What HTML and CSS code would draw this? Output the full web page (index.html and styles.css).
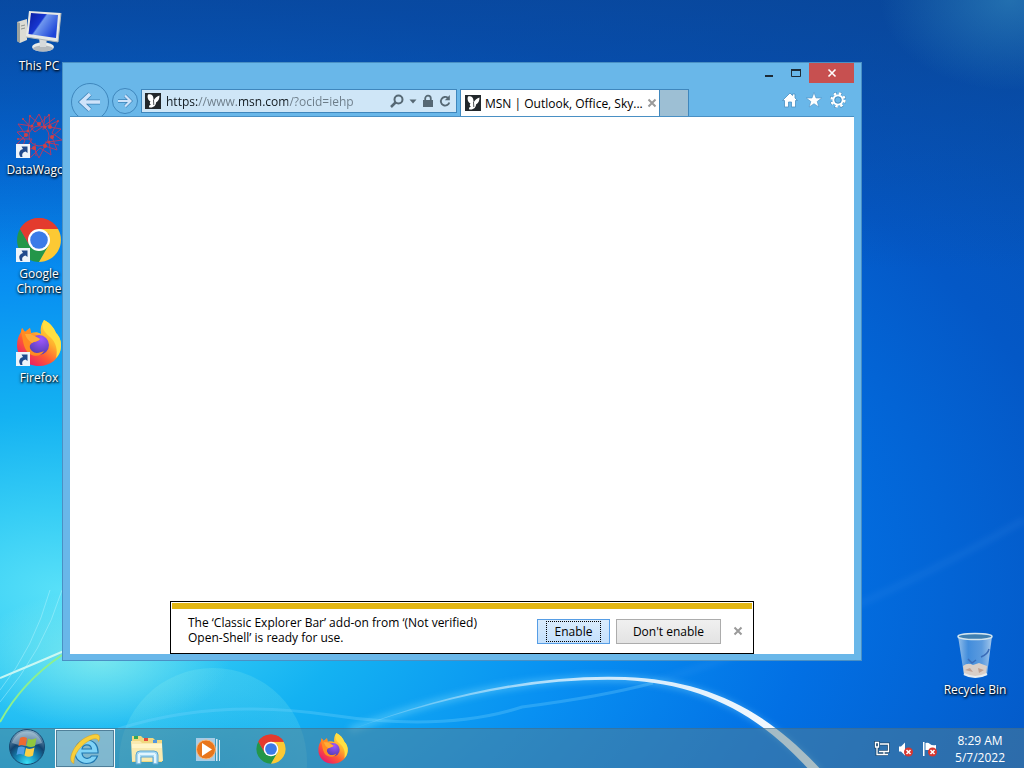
FILE: index.html
```
<!DOCTYPE html>
<html lang="en">
<head>
    <meta charset="UTF-8">
    <meta name="viewport" content="width=device-width, initial-scale=1.0">
    <title>Desktop</title>
    <link rel="stylesheet" href="styles.css">
</head>
<body>

    <!-- Wallpaper -->
    <svg class="wallpaper" viewBox="0 0 1024 768" preserveAspectRatio="none" aria-hidden="true">
        <defs>
            <radialGradient id="sky" gradientUnits="userSpaceOnUse" cx="0" cy="0" r="800" gradientTransform="translate(60 590) scale(1.7 1)">
                <stop offset="0" stop-color="#58e0f8"/>
                <stop offset=".1" stop-color="#36cdf5"/>
                <stop offset=".22" stop-color="#14b2f2"/>
                <stop offset=".38" stop-color="#0890f2"/>
                <stop offset=".55" stop-color="#0270e4"/>
                <stop offset=".76" stop-color="#0458c6"/>
                <stop offset="1" stop-color="#0650b0"/>
            </radialGradient>
            <linearGradient id="dusk" x2="0" y2="1">
                <stop offset="0" stop-color="#0a4392" stop-opacity=".7"/>
                <stop offset=".35" stop-color="#0a4392" stop-opacity="0"/>
            </linearGradient>
            <radialGradient id="corner">
                <stop offset="0" stop-color="#3c97c4" stop-opacity=".5"/>
                <stop offset="1" stop-color="#3c97c4" stop-opacity="0"/>
            </radialGradient>
            <radialGradient id="bubble" cy=".6">
                <stop offset="0" stop-color="#9ff5e8" stop-opacity=".04"/>
                <stop offset="1" stop-color="#9ff5e8" stop-opacity=".16"/>
            </radialGradient>
            <radialGradient id="glow">
                <stop offset="0" stop-color="#b6ffe9" stop-opacity=".5"/>
                <stop offset="1" stop-color="#b6ffe9" stop-opacity="0"/>
            </radialGradient>
            <linearGradient id="beam" gradientUnits="userSpaceOnUse" x1="350" y1="0" x2="820" y2="0">
                <stop offset="0" stop-color="#fff" stop-opacity=".1"/>
                <stop offset=".5" stop-color="#fff" stop-opacity=".75"/>
                <stop offset="1" stop-color="#fff"/>
            </linearGradient>
            <filter id="soft" x="-20%" y="-20%" width="140%" height="140%"><feGaussianBlur stdDeviation="3"/></filter>
        </defs>
        <rect width="1024" height="768" fill="url(#sky)"/>
        <rect width="1024" height="768" fill="url(#dusk)"/>
        <ellipse cx="1010" cy="0" rx="130" ry="90" fill="url(#corner)"/>
        <circle cx="213" cy="762" r="94" fill="url(#bubble)"/>
        <ellipse cx="100" cy="660" rx="130" ry="70" fill="url(#glow)"/>
        <path d="M118 729Q215 698 330 715T522 707Q600 697 653 683" fill="none" stroke="#7fd6ff" stroke-opacity=".28" stroke-width="3"/>
        <path d="M653 683Q850 620 1024 520" fill="none" stroke="#7fc0ff" stroke-opacity=".1" stroke-width="5" filter="url(#soft)"/>
        <path d="M350 730Q500 674 625 679C700 682 760 710 819 772" fill="none" stroke="#8fe4ff" stroke-opacity=".35" stroke-width="7" filter="url(#soft)"/>
        <path d="M350 730Q500 673 625 677C705 680 765 708 823 772L811 772C758 712 700 684 625 680Q500 676 350 730Z" fill="url(#beam)"/>
        <path d="M0 678Q34 664 64 651" fill="none" stroke="#e6fff4" stroke-opacity=".8" stroke-width="2"/>
        <path d="M0 722Q22 682 62 655" fill="none" stroke="#8cf08e" stroke-width="2"/>
        <path d="M0 690Q34 648 50 590M0 702Q44 650 62 590" fill="none" stroke="#c4f8ff" stroke-opacity=".4"/>
    </svg>

    <!-- Shared icons -->
    <svg class="sprite" aria-hidden="true">
        <symbol id="chrome" viewBox="0 0 48 48">
            <path d="M24 24L5 13A22 22 0 0 1 43 13Z" fill="#e33b2e"/>
            <path d="M5 13A22 22 0 0 0 24 46L34 29.500L24 24L14.500 29.500Z" fill="#239649"/>
            <path d="M43 13A22 22 0 0 1 24 46L33.500 29.500L34 18L24 14V13Z" fill="#fcc934"/>
            <path d="M5 13L14.500 29.500L24 24V13H43A22 22 0 0 0 5 13Z" fill="#e33b2e"/>
            <circle cx="24" cy="24" r="11" fill="#fff"/>
            <circle cx="24" cy="24" r="8.800" fill="#3b7be8"/>
        </symbol>
        <symbol id="firefox" viewBox="0 0 48 48">
            <defs>
                <linearGradient id="fire" x1=".85" y1=".1" x2=".2" y2=".95">
                    <stop offset="0" stop-color="#ffe94b"/>
                    <stop offset=".35" stop-color="#ffb02d"/>
                    <stop offset=".65" stop-color="#ff5a35"/>
                    <stop offset="1" stop-color="#e8196c"/>
                </linearGradient>
                <radialGradient id="globe" cx=".6" cy=".2" r=".9">
                    <stop offset="0" stop-color="#a057ff"/>
                    <stop offset="1" stop-color="#4a3aa8"/>
                </radialGradient>
            </defs>
            <path d="M29 0C35 3 39 8 41 13C45 17 46.500 22 46 27C45 38 36 46 24 46C11 46 2 37 2 25C2 19 4 15 6 12L7 8L10 12L15 8L16 13C20 12 23 12 26 14C25 9 26 4 29 0Z" fill="url(#fire)"/>
            <path d="M29 0C35 3 39 8 41 13C45 17 46.500 22 46 27C45.500 32 44 35 41 38C43 30 41 22 35 17C29 12 26 8 29 0Z" fill="#ffdf42"/>
            <circle cx="24" cy="25" r="10" fill="url(#globe)"/>
            <path d="M6 12L7 8L10 12L15 8L16 14L25 19C23 22 19 21 17 23C14 25 14 28 17 31C20 34 25 33 29 31C26 38 15 37 11 30C8 25 8 19 6 12Z" fill="#ff8b22"/>
            <path d="M16 14L25 19C23 22 19 21 17 23Q12 20 10 14Z" fill="#ffab38"/>
        </symbol>
        <symbol id="shortcut" viewBox="0 0 14 14">
            <path d="M0 0H14V14H0Z" fill="#edf4fa"/>
            <path d="M4.500 13C2 9 3.500 6 7 5L5.500 2.500H11.500V9L9.500 7.500C6.500 8.500 5.500 10 6.500 13Z" fill="#204a8c"/>
        </symbol>
        <symbol id="msn" viewBox="0 0 16 16">
            <path d="M0 0H16V16H0Z" fill="#22272b"/>
            <path d="M3 1.500C6 .5 8 2 8.300 4.500L8.600 7.500C10 5 12 3 14.500 2.500C14.500 6 13.500 8 11 9.500C11 12 9 15 4.500 14.500C3.500 14 4 12 6 11.500C4.500 11 4.500 9.500 5.500 8.500C3 7.500 2 4 3 1.500Z" fill="#fff"/>
            <path d="M8.500 7L8.800 12" stroke="#22272b" stroke-width=".8"/>
        </symbol>
        <symbol id="cross" viewBox="0 0 10 10">
            <path d="M1.500 1.500L8.500 8.500M8.500 1.500L1.500 8.500" fill="none" stroke="currentColor" stroke-width="2"/>
        </symbol>
    </svg>

    <main class="desktop">
        <div class="icon-column">
            <a class="desktop-icon" href="#this-pc">
                <svg viewBox="0 0 48 48" aria-hidden="true">
                    <defs>
                        <linearGradient id="screen" x2="1" y2=".6">
                            <stop offset="0" stop-color="#0a1c9e"/>
                            <stop offset=".45" stop-color="#1736d1"/>
                            <stop offset=".5" stop-color="#6f97ee"/>
                            <stop offset="1" stop-color="#1e45d8"/>
                        </linearGradient>
                    </defs>
                    <path d="M2 14L12 11V32L5 35L2 33Z" fill="#dcdcd4"/>
                    <path d="M2 14L5 15V35L2 33Z" fill="#9ba29f"/>
                    <path d="M6 18L10 17M6 21L10 20" stroke="#8d9490"/>
                    <ellipse cx="28" cy="39" rx="11" ry="4.500" fill="#e9ebe9"/>
                    <ellipse cx="28" cy="40.500" rx="10" ry="3" fill="#b4b9bd"/>
                    <path d="M24 29H32L31 39H25Z" fill="#d7dadb"/>
                    <path d="M14 3L46 5L43 34L11 29Z" fill="#e7e9e7"/>
                    <path d="M16 5L43 7L41 30L13.500 26Z" fill="url(#screen)"/>
                    <path d="M11 29L43 34L46 5" fill="none" stroke="#aeb5b8"/>
                </svg>
                <span>This PC</span>
            </a>
            <a class="desktop-icon" href="#datawagon">
                <svg viewBox="0 0 48 48" aria-hidden="true">
                    <g fill="none" stroke="#b03a66" stroke-width="1">
                        <path d="M24 2L30 15L43 9L37 21L47 28L34 30L36 43L25 36L15 46L15 33L2 32L11 23L3 12L17 14Z"/>
                        <path d="M15 4L24 12L34 3L35 15L46 17L37 25L42 38L30 34L24 46L19 36L6 39L10 28L2 20L13 19Z"/>
                        <path d="M8 7L20 20L40 6M3 27L17 27L8 42M30 30L44 33M20 31L21 44M28 18L30 4"/>
                        <circle cx="24" cy="24" r="10"/>
                    </g>
                    <g fill="#cf4044">
                        <circle cx="24" cy="12" r="2"/><circle cx="35" cy="15" r="2"/><circle cx="37" cy="25" r="2"/>
                        <circle cx="30" cy="34" r="2"/><circle cx="19" cy="36" r="2"/><circle cx="11" cy="23" r="2"/>
                        <circle cx="13" cy="19" r="1.500"/><circle cx="30" cy="15" r="1.500"/><circle cx="34" cy="30" r="1.500"/>
                        <circle cx="17" cy="14" r="1.500"/><circle cx="8" cy="7" r="1"/><circle cx="15" cy="4" r="1"/>
                        <circle cx="34" cy="3" r="1"/><circle cx="43" cy="9" r="1"/><circle cx="3" cy="27" r="1"/>
                    </g>
                    <use href="#shortcut" x="1" y="32" width="14" height="14"/>
                </svg>
                <span>DataWagon</span>
            </a>
            <a class="desktop-icon" href="#chrome-app">
                <svg viewBox="0 0 48 48" aria-hidden="true">
                    <use href="#chrome" width="48" height="48"/>
                    <use href="#shortcut" x="1" y="32" width="14" height="14"/>
                </svg>
                <span>Google Chrome</span>
            </a>
            <a class="desktop-icon" href="#firefox-app">
                <svg viewBox="0 0 48 48" aria-hidden="true">
                    <use href="#firefox" width="48" height="48"/>
                    <use href="#shortcut" x="1" y="32" width="14" height="14"/>
                </svg>
                <span>Firefox</span>
            </a>
        </div>

        <div class="icon-column icon-column-end">
            <a class="desktop-icon" href="#recycle-bin">
                <svg viewBox="0 0 48 48" aria-hidden="true">
                    <defs>
                        <linearGradient id="glass">
                            <stop offset="0" stop-color="#b9d6ee" stop-opacity=".8"/>
                            <stop offset=".3" stop-color="#5d9fe0" stop-opacity=".7"/>
                            <stop offset=".7" stop-color="#82b4e4" stop-opacity=".7"/>
                            <stop offset="1" stop-color="#cfe3f3" stop-opacity=".8"/>
                        </linearGradient>
                    </defs>
                    <path d="M7 4H41L36 43Q24 48 13 43Z" fill="url(#glass)"/>
                    <path d="M12 34Q17 30 22 33L28 31L36 34L35 42Q24 47 13 42Z" fill="#d9cfc8"/>
                    <path d="M14 38L19 36L22 40ZM27 36L33 38L28 41Z" fill="#c0a294"/>
                    <path d="M13 42Q24 48 36 42" fill="none" stroke="#e8eef2" stroke-width="2"/>
                    <path d="M17 27L21 31L25 28M30 25Q37 22 38 17" fill="none" stroke="#3a6cb8" stroke-width="1.500"/>
                    <ellipse cx="24" cy="4.500" rx="17" ry="3" fill="#3f7fb0" stroke="#d3e5ee" stroke-width="1.500"/>
                </svg>
                <span>Recycle Bin</span>
            </a>
        </div>

        <section class="window" aria-label="Internet Explorer">
            <div class="caption">
                <button type="button" class="caption-button" aria-label="Minimize">
                    <svg width="10" height="10" viewBox="0 0 10 10"><path d="M1 7H9V9H1Z" fill="#1d2b36"/></svg>
                </button>
                <button type="button" class="caption-button" aria-label="Maximize">
                    <svg width="10" height="10" viewBox="0 0 10 10"><path d="M.5 2H9.500V8.500H.5Z" fill="none" stroke="#1d2b36"/><path d="M0 1H10V3H0Z" fill="#1d2b36"/></svg>
                </button>
                <button type="button" class="caption-button close" aria-label="Close">
                    <svg width="10" height="10" viewBox="0 0 10 10"><path d="M1.500 1.500L8.500 8.500M8.500 1.500L1.500 8.500" stroke="#fff" stroke-width="1.600"/></svg>
                </button>
            </div>

            <div class="navbar">
                <button type="button" class="nav-button back" aria-label="Back">
                    <svg width="24" height="20" viewBox="0 0 24 20"><path d="M12 2L3.500 10L12 18M4 10H22" fill="none" stroke="#3d83b8" stroke-width="5"/><path d="M12 2L3.500 10L12 18M4 10H22" fill="none" stroke="#cfe3fa" stroke-width="3.500"/></svg>
                </button>
                <button type="button" class="nav-button forward" aria-label="Forward">
                    <svg width="16" height="14" viewBox="0 0 16 14"><path d="M8 1.500L13.500 7L8 12.500M13 7H1" fill="none" stroke="#3d83b8" stroke-width="3.500"/><path d="M8 1.500L13.500 7L8 12.500M13 7H1" fill="none" stroke="#cfe3fa" stroke-width="2.200"/></svg>
                </button>

                <form class="address">
                    <svg width="16" height="16" aria-hidden="true"><use href="#msn"/></svg>
                    <input type="text" class="url" value="https://www.msn.com/?ocid=iehp" aria-label="Address">
                    <button type="button" aria-label="Search">
                        <svg width="14" height="14" viewBox="0 0 14 14"><circle cx="8.500" cy="5.500" r="4" fill="none" stroke="#566874" stroke-width="2"/><path d="M5.500 8.500L1 13" stroke="#566874" stroke-width="2.500"/></svg>
                    </button>
                    <button type="button" aria-label="Show address list">
                        <svg width="8" height="14" viewBox="0 0 8 14"><path d="M.5 5.500H7.500L4 9.500Z" fill="#566874"/></svg>
                    </button>
                    <button type="button" aria-label="Security report">
                        <svg width="12" height="14" viewBox="0 0 12 14"><path d="M1 6H11V13H1Z" fill="#566874"/><path d="M3.200 6V4.500A2.800 2.800 0 0 1 8.800 4.500V6" fill="none" stroke="#566874" stroke-width="1.800"/></svg>
                    </button>
                    <button type="button" aria-label="Refresh">
                        <svg width="12" height="14" viewBox="0 0 12 14"><path d="M9 4A4.300 4.300 0 1 0 10.300 8.500" fill="none" stroke="#566874" stroke-width="1.800"/><path d="M10.800 1V6.200H5.800Z" fill="#566874"/></svg>
                    </button>
                </form>

                <div class="tabs">
                    <div class="tab">
                        <svg width="16" height="16" aria-hidden="true"><use href="#msn"/></svg>
                        <span>MSN | Outlook, Office, Sky...</span>
                        <button type="button" aria-label="Close tab"><svg width="10" height="10"><use href="#cross"/></svg></button>
                    </div>
                    <button type="button" class="new-tab" aria-label="New tab"></button>
                </div>

                <div class="tools">
                    <button type="button" aria-label="Home">
                        <svg width="16" height="16" viewBox="0 0 16 16"><path d="M8 1L10.500 3.500V2H13V6L15.500 8.500H13.500V15H9.500V10H6.500V15H2.500V8.500H.5Z" fill="#fff" stroke="#4a8fc2" stroke-width=".8"/></svg>
                    </button>
                    <button type="button" aria-label="Favorites">
                        <svg width="16" height="16" viewBox="0 0 16 16"><path d="M8 .5L10 6H15.700L11.200 9.500L12.800 15L8 11.700L3.200 15L4.800 9.500L.3 6H6Z" fill="#fff" stroke="#4a8fc2" stroke-width=".6"/></svg>
                    </button>
                    <button type="button" aria-label="Tools">
                        <svg width="16" height="16" viewBox="0 0 16 16">
                            <circle cx="8" cy="8" r="6.400" fill="none" stroke="#3f81b1" stroke-width="3.500" stroke-dasharray="2.900 2.127"/>
                            <circle cx="8" cy="8" r="6.400" fill="none" stroke="#fff" stroke-width="2.600" stroke-dasharray="2.500 2.527"/>
                            <circle cx="8" cy="8" r="4.600" fill="none" stroke="#fff" stroke-width="2"/>
                            <circle cx="8" cy="8" r="3.200" fill="none" stroke="#3f81b1" stroke-width=".8"/>
                        </svg>
                    </button>
                </div>
            </div>

            <div class="page">
                <div class="notification" role="alert">
                    <p>The ‘Classic Explorer Bar’ add-on from ‘(Not verified) Open-Shell’ is ready for use.</p>
                    <button type="button" class="button primary"><span>Enable</span></button>
                    <button type="button" class="button">Don't enable</button>
                    <button type="button" class="dismiss" aria-label="Close"><svg width="10" height="10"><use href="#cross"/></svg></button>
                </div>
            </div>
        </section>
    </main>

    <footer class="taskbar">
        <button type="button" class="start" aria-label="Start">
            <svg width="38" height="38" viewBox="0 0 38 38">
                <defs>
                    <radialGradient id="orb" cx=".5" cy=".95" r=".9">
                        <stop offset="0" stop-color="#38e0f5"/>
                        <stop offset=".35" stop-color="#1689b8"/>
                        <stop offset=".65" stop-color="#12436f"/>
                        <stop offset="1" stop-color="#7ea3bd"/>
                    </radialGradient>
                </defs>
                <circle cx="19" cy="19" r="17.500" fill="url(#orb)" stroke="#164a72"/>
                <path d="M4 15A15.500 15.500 0 0 1 34 15Q19 21 4 15Z" fill="#d6e9f3" fill-opacity=".4"/>
                <path d="M12 10Q15 8 19 10L17.500 18Q14 16 10.500 18Z" fill="#ec6a31"/>
                <path d="M20 10.500Q24 12.500 28.500 10L27 18Q23 20 18.500 18Z" fill="#91c73e"/>
                <path d="M10 19.500Q13 17.500 17 19.500L15.500 27Q12 25 8.500 27Z" fill="#4f9fe6"/>
                <path d="M18 20Q22 22 26.500 19.500L25 27.500Q21 30 16.500 27.500Z" fill="#fbd045"/>
            </svg>
        </button>

        <nav class="tasks" aria-label="Taskbar">
            <button type="button" class="task active" aria-label="Internet Explorer">
                <svg width="32" height="32" viewBox="0 0 32 32">
                    <path fill-rule="evenodd" d="M29 20H13C13.500 26 20 27 22.500 23H28.500C26.500 28.500 22 30.500 17.500 30.500C10.500 30.500 6 25.500 6 19C6 12 11 7 17.500 7C25 7 29.500 12.500 29 20ZM13 16H22.500C22 10.500 14 10.500 13 16Z" fill="#7fd3f7" stroke="#1f77b0" stroke-width="1.200"/>
                    <path d="M5 30.500C-2 29 3 15 12 7.500C20 1.500 29 -.5 30.500 3C31 5 30.500 7 29.500 8.500C29 5.500 26 5 21.500 7C12 11.500 4 22 5 30.500Z" fill="#f8cf3a" stroke="#c9982a" stroke-width=".5"/>
                </svg>
            </button>
            <button type="button" class="task" aria-label="File Explorer">
                <svg width="32" height="32" viewBox="0 0 32 32">
                    <path d="M1 3H10L12 5H22L24 7H31V29H1Z" fill="#f0d880"/>
                    <path d="M3 3H7V6H3Z" fill="#35a853"/><path d="M13 5H17V8H13Z" fill="#e34b3b"/><path d="M22 7H26V10H22Z" fill="#5397df"/>
                    <path d="M0 8H9L11 10H31L32 28H1Z" fill="#f9eab0"/>
                    <path d="M1 11H31V15H1Z" fill="#fff5c9"/>
                    <path d="M5 31V22Q5 18 9 18H23Q27 18 27 22V31H22V24H10V31Z" fill="#a9d9f2" stroke="#5da5d0"/>
                    <path d="M8 21H24M8 21V30M24 21V30" stroke="#e2f5ff" stroke-width="2" fill="none"/>
                </svg>
            </button>
            <button type="button" class="task" aria-label="Windows Media Player">
                <svg width="32" height="32" viewBox="0 0 32 32">
                    <path d="M3 5H22V28H3Z" fill="#a7cce5"/>
                    <path d="M23 6H24.500V28H23ZM26 7H27V28H26Z" fill="#d5eaf7"/>
                    <circle cx="13" cy="16.500" r="9.500" fill="#e8761c" stroke="#f7b97f"/>
                    <path d="M9 10L19 16.500L9 23Z" fill="#fff"/>
                </svg>
            </button>
            <button type="button" class="task" aria-label="Google Chrome"><svg width="32" height="32"><use href="#chrome"/></svg></button>
            <button type="button" class="task" aria-label="Firefox"><svg width="32" height="32"><use href="#firefox"/></svg></button>
        </nav>

        <div class="tray">
            <button type="button" aria-label="Network">
                <svg width="16" height="16" viewBox="0 0 16 16" fill="none"><path d="M6 3H14.500V10.500H5M10 10.500V13M6 13.500H14M3 6V13.500H6M1.500 1.500H4.500V6H1.500Z" stroke="#1b4a73" stroke-width="3"/><path d="M6 3H14.500V10.500H5M10 10.500V13M6 13.500H14M3 6V13.500H6M1.500 1.500H4.500V6H1.500Z" stroke="#fff" stroke-width="1.300"/></svg>
            </button>
            <button type="button" aria-label="Volume">
                <svg width="16" height="16" viewBox="0 0 16 16"><path d="M1 5.500H3L7 1.500V14.500L3 10.500H1Z" fill="#fff"/><circle cx="10.500" cy="11" r="4.500" fill="#d8362f"/><path d="M8.500 9L12.500 13M12.500 9L8.500 13" stroke="#fff" stroke-width="1.500"/></svg>
            </button>
            <button type="button" aria-label="Action Center">
                <svg width="16" height="16" viewBox="0 0 16 16"><path d="M1 1H2.500V15H1ZM3.500 2Q6 1 8 3T14 4V9H3.500Z" fill="#fff"/><circle cx="10.500" cy="11" r="4.500" fill="#d8362f"/><path d="M8.500 9L12.500 13M12.500 9L8.500 13" stroke="#fff" stroke-width="1.500"/></svg>
            </button>
            <div class="clock">
                <time>8:29 AM</time>
                <time>5/7/2022</time>
            </div>
        </div>
    </footer>

</body>
</html>
```
FILE: styles.css
```
* {
    margin: 0;
    padding: 0;
    box-sizing: border-box;
}

body {
    font-family: "Open Sans", "Noto Sans", sans-serif;
    font-size: 12px;
    line-height: 15px;
    color: #000;
    height: 100vh;
    display: flex;
    flex-direction: column;
    overflow: hidden;
    background-color: #0769d8;
}

button {
    font: inherit;
    color: inherit;
    background: none;
    border: none;
    display: flex;
    align-items: center;
    justify-content: center;
}

svg {
    display: block;
    flex: none;
}

.wallpaper {
    position: absolute;
    inset: 0;
    width: 100%;
    height: 100%;
    z-index: -1;
}

.sprite {
    position: absolute;
    width: 0;
    height: 0;
}

/* Desktop */
.desktop {
    position: relative;
    flex: 1;
    display: flex;
    justify-content: space-between;
    min-height: 0;
}

.icon-column {
    display: flex;
    flex-direction: column;
    width: 78px;
}

.icon-column-end {
    justify-content: flex-end;
    margin-right: 10px;
}

.desktop-icon {
    display: flex;
    flex-direction: column;
    align-items: center;
    height: 104px;
    padding-top: 8px;
    gap: 2px;
    color: #fff;
    text-align: center;
    text-decoration: none;
    text-shadow: 1px 1px 2px #000, 0 1px 3px rgba(0, 0, 0, 0.8);
}

.desktop-icon svg {
    width: 48px;
    height: 48px;
}

/* Browser window */
.window {
    position: absolute;
    inset: 62px 162px 67px 62px;
    display: flex;
    flex-direction: column;
    padding: 0 7px 6px;
    background-color: #69b7e9;
    border: 1px solid #4a90c4;
}

.caption {
    display: flex;
    justify-content: flex-end;
    height: 20px;
}

.caption-button {
    width: 27px;
}

.caption-button.close {
    width: 45px;
    background-color: #c75050;
}

.navbar {
    display: flex;
    align-items: flex-start;
    height: 34px;
    overflow: hidden;
    border-bottom: 1px solid #4a90c4;
}

.nav-button {
    flex: none;
    border: 1px solid #3f87bd;
    border-radius: 50%;
    background-color: #72bbea;
}

.back {
    width: 38px;
    height: 38px;
    margin-left: 1px;
}

.forward {
    width: 26px;
    height: 26px;
    margin: 5px 3px 0;
}

.address {
    display: flex;
    align-items: center;
    gap: 5px;
    flex: 0 1 316px;
    height: 24px;
    margin-top: 6px;
    padding: 0 5px 0 3px;
    background-color: #cfe6f7;
    border: 1px solid #3f87bd;
}

.url {
    flex: 1;
    min-width: 0;
    font: inherit;
    border: none;
    outline: none;
    /* scheme and domain are dark, the rest of the address is grey */
    color: transparent;
    background: linear-gradient(90deg, #10181e 32px, #6c7c88 32px 71px, #10181e 71px 122px, #6c7c88 122px);
    background-clip: text;
    -webkit-background-clip: text;
}

.tabs {
    display: flex;
    margin: 6px 0 0 3px;
    height: 27px;
}

.tab {
    display: flex;
    align-items: center;
    gap: 4px;
    width: 200px;
    padding: 0 4px;
    white-space: nowrap;
    background-color: #fff;
    border: 1px solid #3f87bd;
    border-bottom: none;
}

.tab span {
    flex: 1;
}

.tab button,
.dismiss {
    color: #9a9a9a;
}

.new-tab {
    width: 29px;
    background-color: #9dbfd4;
    border: 1px solid #3f87bd;
    border-width: 1px 1px 0 0;
}

.tools {
    display: flex;
    gap: 8px;
    margin: 9px 8px 0 auto;
}

.page {
    flex: 1;
    display: flex;
    align-items: flex-end;
    justify-content: center;
    background-color: #fff;
}

/* Add-on notification */
.notification {
    display: flex;
    align-items: center;
    width: 584px;
    padding: 8px 4px 1px 17px;
    border: 1px solid #000;
    outline: 1px solid #fff;
    outline-offset: -2px;
    box-shadow: inset 0 7px #e3b714;
}

.notification p {
    width: 300px;
    margin-right: auto;
    padding: 5px 0 7px;
}

.button {
    height: 25px;
    min-width: 105px;
    margin-right: 6px;
    background: linear-gradient(#f0f0f0, #e3e3e3);
    border: 1px solid #acacac;
}

.button.primary {
    min-width: 73px;
    background: linear-gradient(#daecfc, #c4e0fc);
    border-color: #569de5;
}

.button.primary span {
    padding: 2px 8px;
    border: 1px dotted #000;
}

.dismiss {
    width: 22px;
    height: 25px;
}

/* Taskbar */
.taskbar {
    display: flex;
    align-items: stretch;
    height: 40px;
    color: #fff;
    background-color: rgba(85, 125, 140, 0.5);
    border-top: 1px solid rgba(60, 100, 130, 0.4);
}

.start {
    width: 54px;
    height: 36px;
}

.tasks {
    display: flex;
    gap: 2px;
    margin-left: 1px;
}

.task {
    width: 60px;
}

.task.active {
    background-color: rgba(190, 210, 220, 0.55);
    border: 1px solid #f2fafc;
    outline: 1px solid rgba(30, 70, 100, 0.5);
    outline-offset: -2px;
}

.tray {
    display: flex;
    align-items: center;
    gap: 8px;
    margin-left: auto;
    padding-right: 19px;
}

.clock {
    display: flex;
    flex-direction: column;
    align-items: center;
    margin-left: 9px;
    line-height: 17px;
}
```
